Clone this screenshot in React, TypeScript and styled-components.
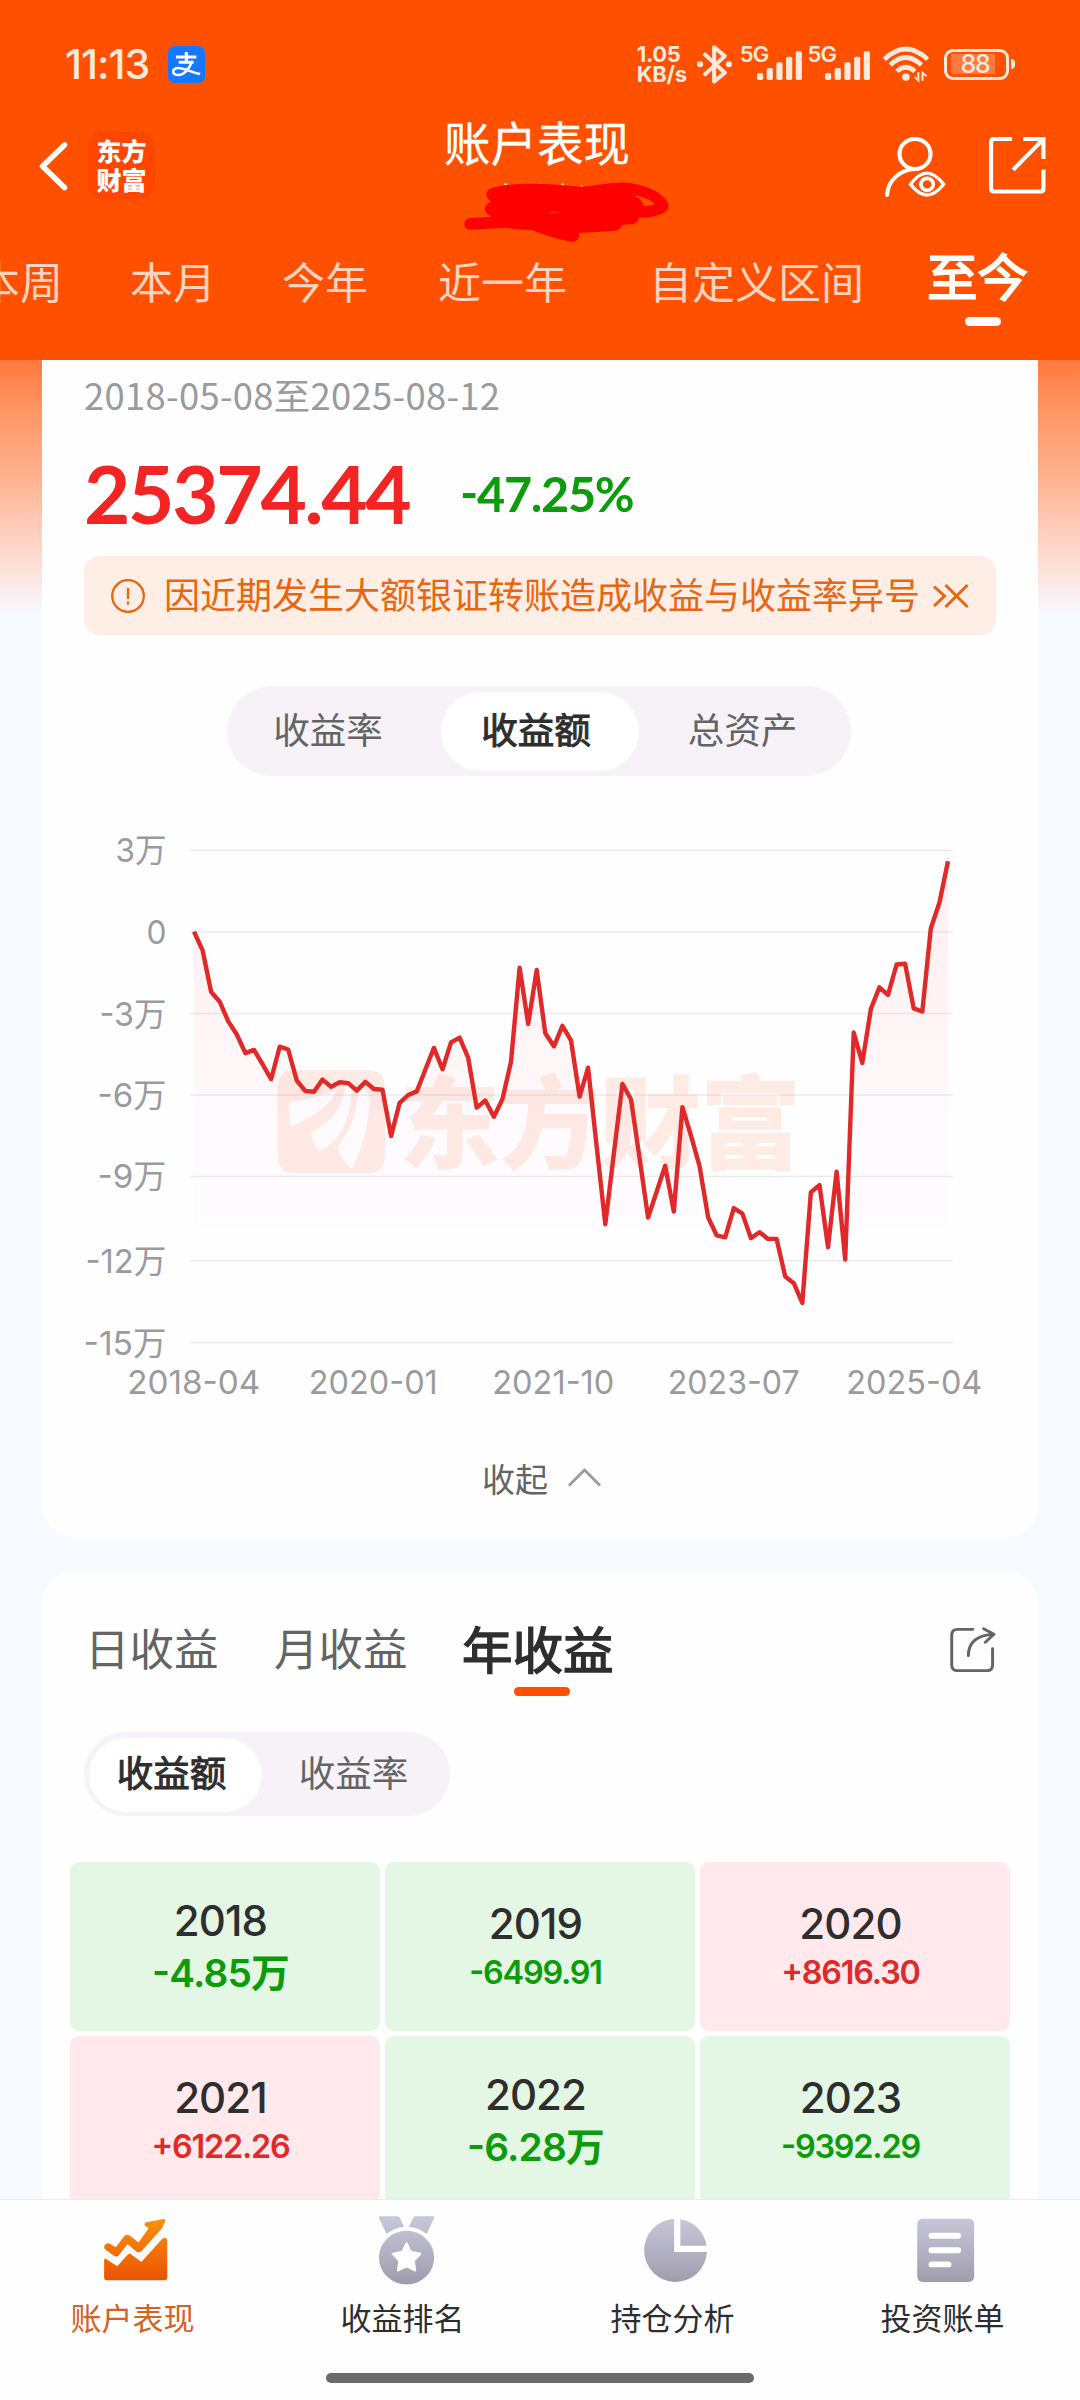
import React from "react";
import styled, { createGlobalStyle, css } from "styled-components";

const CJK = `"Noto Sans CJK SC", sans-serif`;
const NUM = `Inter, "Noto Sans CJK SC", sans-serif`;

const GlobalStyle = createGlobalStyle`
  *, *::before, *::after { box-sizing: border-box; }
  body { margin: 0; background: #f7faff; font-family: ${CJK}; }
  svg { display: block; flex: none; overflow: visible; }
`;

const Screen = styled.div`
  width: 1080px;
  height: 2400px;
  display: flex;
  flex-direction: column;
  overflow: hidden;
  background: #f7faff;
`;

/* ---------- header ---------- */

const Header = styled.header`
  flex: none;
  height: 360px;
  background: #ff5000;
  color: #fff;
  overflow: hidden;
`;

const StatusBar = styled.div`
  height: 110px;
  padding: 18px 65.5px 0 65px;
  display: flex;
  align-items: center;
  justify-content: space-between;
  color: #ffe9dc;
`;

const StatusGroup = styled.div`
  display: flex;
  align-items: center;
`;

const Clock = styled.span`
  width: 103px;
  font: 500 41px/46px ${NUM};
  letter-spacing: -1px;
`;

const Speed = styled.div`
  width: 60.6px;
  font: 700 22px/20px ${NUM};
  letter-spacing: -0.3px;
  white-space: nowrap;
`;

const Radios = styled.div`
  display: flex;
  margin: 0 6.6px 0 8.5px;
`;

const Signal = styled.div`
  display: flex;
  width: 67.8px;
  height: 38.7px;
`;

const Network = styled.span`
  width: 17.2px;
  margin-left: -1px;
  font: 600 22px/19px ${NUM};
  letter-spacing: -1px;
`;

const Battery = styled.div`
  display: flex;
  align-items: center;
  gap: 2px;
  margin-left: 15px;
`;

const BatteryCell = styled.div`
  width: 64.5px;
  height: 31px;
  padding: 2.5px 3.5px;
  border: 3px solid #ffe9dc;
  border-radius: 9px;
`;

const BatteryLevel = styled.div`
  width: 44px;
  height: 20px;
  padding-left: 10px;
  background: rgba(255, 255, 255, 0.24);
  font: 500 25px/20px ${NUM};
  letter-spacing: -1.2px;
`;

const BatteryNub = styled.div`
  width: 4px;
  height: 10px;
  border-radius: 0 4px 4px 0;
  background: #ffe9dc;
`;

const NavBar = styled.div`
  height: 122px;
  display: grid;
  grid-template-columns: 340px 1fr 340px;
`;

const NavSide = styled.div<{ $end?: boolean }>`
  display: flex;
  align-items: flex-start;
  padding: ${(p) => (p.$end ? "26.500px 35px 0 0" : "22px 0 0 39px")};
  gap: ${(p) => (p.$end ? "44px" : "20px")};
  justify-content: ${(p) => (p.$end ? "flex-end" : "flex-start")};
`;

const BackArrow = styled.svg`
  margin-top: 10.3px;
`;

const BrandBadge = styled.div`
  width: 67px;
  height: 67px;
  padding: 4px 0 0 8.5px;
  border-radius: 14px;
  background: #ff4600;
  font: 900 25px/28.5px ${CJK};
`;

const TitleColumn = styled.div`
  display: flex;
  flex-direction: column;
  align-items: center;
  padding: 7px 6px 0 0;
`;

const Title = styled.h1`
  margin: 0 0 17.5px;
  font: 400 46.5px/47px ${CJK};
  -webkit-text-stroke: 0.3px currentColor;
`;

const Scribble = styled.svg`
  margin-left: 58px;
`;

const PeriodTabs = styled.nav`
  display: flex;
  width: max-content;
  margin-left: -23px;
  padding-top: 18.4px;
`;

const PeriodTab = styled.div<{ $gap: number; $active?: boolean }>`
  margin-left: ${(p) => p.$gap}px;
  font: 400 43px/60px ${CJK};
  color: rgba(255, 255, 255, 0.76);
  white-space: nowrap;
  ${(p) =>
    p.$active &&
    css`
      margin-top: -6.4px;
      color: #fff;
      font-size: 50.5px;
      -webkit-text-stroke: 1.8px currentColor;
    `}
`;

const TabMark = styled.div<{ $w: number; $color: string; $m: string }>`
  width: ${(p) => p.$w}px;
  height: 9px;
  margin: ${(p) => p.$m};
  border-radius: 5px;
  background: ${(p) => p.$color};
`;

/* ---------- scrolling body ---------- */

const Body = styled.main`
  flex: none;
  height: 1839px;
  padding: 0 42px;
  overflow: hidden;
  background: linear-gradient(
      180deg,
      #ff7a3e 0,
      #ff9565 50px,
      #ffb08e 114px,
      #fed0c0 175px,
      #fde3dd 212px,
      #f9f1f4 238px,
      #f7faff 254px
    )
    no-repeat;
`;

const Card = styled.section<{ $first?: boolean }>`
  border-radius: ${(p) => (p.$first ? "0 0 33px 33px" : "33px")};
  height: ${(p) => (p.$first ? "1178.3px" : "700px")};
  margin-bottom: 33.3px;
  background: #fefefe;
  display: flex;
  flex-direction: column;
`;

const DateRange = styled.div`
  margin: 10px 42px 0;
  font: 400 36.4px/48px ${CJK};
  letter-spacing: 0.3px;
  color: #9b9b9d;
`;

const Totals = styled.div`
  display: flex;
  align-items: center;
  height: 100px;
  margin: 25px 42px 0;
  font-family: Lato, ${CJK};
  font-feature-settings: "case";
`;

const Profit = styled.span`
  width: 376px;
  font-size: 80px;
  font-weight: 700;
  line-height: 100px;
  letter-spacing: -2.3px;
  color: #f22424;
`;

const Rate = styled.span`
  font-size: 48.6px;
  font-weight: 700;
  letter-spacing: -1.3px;
  color: #0b9b0b;
`;

const Notice = styled.div`
  flex: none;
  height: 79px;
  margin: 13px 42px 0;
  padding: 0 27px;
  display: flex;
  align-items: center;
  border-radius: 16px;
  background: #ffeee6;
  color: #e8660f;
`;

const NoticeText = styled.span`
  width: 769px;
  margin: -5px 0 0 19px;
  font: 400 36px/50px ${CJK};
  white-space: nowrap;
`;

const Segment = styled.div<{ $w: number; $h: number; $m: string; $pad: string }>`
  flex: none;
  width: ${(p) => p.$w}px;
  height: ${(p) => p.$h}px;
  margin: ${(p) => p.$m};
  padding: ${(p) => p.$pad};
  display: flex;
  border-radius: 46px;
  background: #f6f2f7;
`;

const SegmentItem = styled.div<{ $w: number; $pr: number; $active?: boolean }>`
  flex: none;
  width: ${(p) => p.$w}px;
  padding: 0 ${(p) => p.$pr}px 6px 0;
  display: flex;
  align-items: center;
  justify-content: center;
  border-radius: 42px;
  font: 400 36.6px/50px ${CJK};
  color: ${(p) => (p.$active ? "#2e2e2e" : "#646464")};
  background: ${(p) => (p.$active ? "#fff" : "transparent")};
  -webkit-text-stroke: ${(p) => (p.$active ? "1px" : "0")} currentColor;
`;

const Chart = styled.svg`
  margin: 24px 0 0 18px;
  font-family: ${NUM};
  font-feature-settings: "case";
  fill: #9b9b9d;
`;

const Collapse = styled.div`
  display: flex;
  align-items: center;
  margin: 53.5px 0 0 440px;
  gap: 20px;
  font: 400 33px/48px ${CJK};
  color: #646464;
`;

const CardHead = styled.div`
  display: flex;
  align-items: flex-start;
  height: 160.4px;
  padding: 45px 43px 0;
`;

const ReturnTab = styled.div<{ $w: number; $active?: boolean }>`
  width: ${(p) => p.$w}px;
  font: 400 ${(p) => (p.$active ? "50.500px" : "44.500px")}/60px ${CJK};
  color: ${(p) => (p.$active ? "#2e2e2e" : "#646464")};
  -webkit-text-stroke: ${(p) => (p.$active ? "1.5px" : "0")} currentColor;
  white-space: nowrap;
`;

const HeadAction = styled.div`
  margin: 10.5px 0 0 auto;
`;

const YearGrid = styled.div`
  display: grid;
  grid-template-columns: repeat(3, 310px);
  grid-auto-rows: 168.6px;
  gap: 5.3px 5px;
  margin: 46.3px 28px 0;
`;

const YearCell = styled.div<{ $up?: boolean }>`
  display: flex;
  flex-direction: column;
  align-items: center;
  padding: 37.5px 9px 0 0;
  border-radius: 9px;
  background: ${(p) => (p.$up ? "#ffe9ec" : "#e4f6e4")};
  color: ${(p) => (p.$up ? "#de2a2a" : "#0b9b0b")};
`;

const Year = styled.div<{ $raised?: boolean }>`
  margin-top: ${(p) => (p.$raised ? -3 : 0)}px;
  margin-bottom: ${(p) => (p.$raised ? 4 : 1)}px;
  font: 500 42px/50px ${NUM};
  letter-spacing: -0.9px;
  color: #2e2e2e;
`;

const Amount = styled.div<{ $large?: boolean }>`
  font: 600 ${(p) => (p.$large ? 38.8 : 32.4)}px/46px ${NUM};
  font-feature-settings: "case";
  letter-spacing: ${(p) => (p.$large ? -0.8 : -1.2)}px;
`;

/* ---------- bottom navigation ---------- */

const Footer = styled.footer`
  flex: none;
  height: 201px;
  border-top: 1px solid #ececee;
  background: #fefefe;
  display: flex;
  flex-direction: column;
  align-items: center;
`;

const NavItems = styled.div`
  display: grid;
  grid-template-columns: repeat(4, 270px);
  height: 173px;
`;

const NavItem = styled.div<{ $active?: boolean }>`
  display: flex;
  flex-direction: column;
  align-items: center;
  padding-top: 14.3px;
  color: ${(p) => (p.$active ? "#d5621f" : "#2e2e2e")};
`;

const NavLabel = styled.span`
  margin: 7.6px 5px 0 0;
  font: 400 31px/46px ${CJK};
`;

const HomeBar = styled.div`
  width: 428px;
  height: 10px;
  border-radius: 5px;
  background: #6c696d;
`;

/* ---------- icons ---------- */

const AlipayIcon = () => (
  <svg width="37" height="37" viewBox="0 0 107 111" preserveAspectRatio="none" fill="none">
    <rect width="107" height="111" rx="20" fill="#1677ff" />
    <g stroke="#fff" strokeWidth="9">
      <path d="M23 33H82M53 18V49M31 49H74" />
      <path d="M69 47C62 70 46 86 31 87C10 87 10 66 30 66C50 66 66 80 93 84" strokeWidth="7.500" />
    </g>
  </svg>
);

const BluetoothIcon = () => (
  <svg
    width="35"
    height="38.7"
    viewBox="0 0 102 116"
    preserveAspectRatio="none"
    fill="none"
    stroke="#ffe9dc"
    strokeWidth="12"
    strokeLinejoin="round"
  >
    <path d="M20 25L81 83L50 109V7L81 33L20 91" />
    <circle cx="9" cy="58" r="9" fill="#ffe9dc" stroke="none" />
    <circle cx="93" cy="58" r="9" fill="#ffe9dc" stroke="none" />
  </svg>
);

const BARS = [21, 36, 53, 70, 86];

const SignalBars = () => (
  <svg width="45" height="38.7" viewBox="0 0 131 116" preserveAspectRatio="none" fill="#ffe9dc">
    {BARS.map((h, i) => (
      <rect key={h} x={i * 28.2} y={105 - h} width="18" height={h} rx="5" />
    ))}
  </svg>
);

const WifiIcon = () => (
  <svg width="46" height="33.7" viewBox="0 0 133 101" preserveAspectRatio="none" fill="none" stroke="#ffe9dc">
    <path d="M4 37Q66 -25 129 37" strokeWidth="14" />
    <path d="M21 54Q66 9 111 54" strokeWidth="14" />
    <path d="M40 73Q66 48 92 73" strokeWidth="14" />
    <circle cx="66" cy="90" r="11" fill="#ffe9dc" stroke="none" />
    <path d="M102 76V100L92 90M114 101V77L126 88" strokeWidth="6" />
  </svg>
);

const ViewerIcon = () => (
  <svg width="60" height="60" viewBox="0 0 174 180" preserveAspectRatio="none" fill="none" stroke="#fff" strokeWidth="12">
    <circle cx="87" cy="51" r="45" />
    <path d="M87 96C45 97 8 130 6 174" strokeLinecap="round" />
    <path d="M74 142Q121 75 170 142Q121 206 74 142Z" strokeWidth="10" />
    <circle cx="122" cy="142" r="18" strokeWidth="11" />
  </svg>
);

const ExternalIcon = () => (
  <svg width="56.500" height="56.500" viewBox="0 0 164 169" preserveAspectRatio="none" fill="none" stroke="#fff" strokeWidth="12">
    <path d="M67 6H14Q6 6 6 14V155Q6 163 14 163H150Q158 163 158 155V97" />
    <path d="M99 6H158V66M158 6L70 98" />
  </svg>
);

const ScribbleMark = () => (
  <Scribble width="205" height="60" viewBox="70 64 615 180">
    <g fill="#ffd9c4">
      <circle cx="195" cy="71" r="4" />
      <circle cx="298" cy="70" r="2.500" />
      <circle cx="366" cy="72" r="4" />
      <circle cx="424" cy="77" r="3" />
    </g>
    <path
      fillRule="evenodd"
      fill="#f00"
      d="M155 81C220 66 300 66 420 78C470 76 510 64 555 66C620 70 684 105 684 137C683 162 635 171 594 171C594 183 585 191 570 191L543 193C542 204 535 209 520 210C490 213 450 214 415 217C416 236 409 243 395 243C355 238 310 222 272 208C245 208 220 205 196 201L90 207C65 207 65 173 90 172L152 168C128 158 125 132 152 123C130 109 134 86 155 81ZM575 103C595 110 607 121 610 137C622 137 633 135 643 131C630 117 605 106 575 103ZM317 155C330 157 345 157 360 154C345 153 330 153 317 155Z"
    />
  </Scribble>
);

const InfoIcon = () => (
  <svg width="34" height="34" viewBox="0 0 34 34" fill="none" stroke="currentColor" strokeWidth="2.300">
    <circle cx="17" cy="17" r="15.800" />
    <path d="M17 9V20M17 22.500V25.500" />
  </svg>
);

const MoreCloseIcon = () => (
  <svg width="36" height="24" viewBox="0 0 36 24" fill="none" stroke="currentColor" strokeWidth="3">
    <path d="M1 2.500L11.500 12L1 22M12.500 1L34.500 23M34.500 1L12.500 23" />
  </svg>
);

const ShareIcon = () => (
  <svg
    width="45"
    height="45.300"
    viewBox="0 0 130 136"
    preserveAspectRatio="none"
    fill="none"
    stroke="#646464"
    strokeWidth="8.500"
    strokeLinecap="round"
    strokeLinejoin="round"
  >
    <path d="M66 7H22Q5 7 5 24V114Q5 131 22 131H107Q123 131 123 114V65" />
    <path d="M53 86C53 46 77 24 127 22M97 5L127 22L102 46" />
  </svg>
);

const IconGradient = ({ id, from, to }: { id: string; from: string; to: string }) => (
  <defs>
    <linearGradient id={id} x1="0" y1="10" x2="0" y2="195" gradientUnits="userSpaceOnUse">
      <stop stopColor={from} />
      <stop offset="1" stopColor={to} />
    </linearGradient>
  </defs>
);

const NavSvg = styled.svg.attrs({ viewBox: "0 0 203 203", preserveAspectRatio: "none" })`
  width: 70px;
  height: 72.6px;
`;

const PerformanceIcon = () => (
  <NavSvg fill="url(#hot)">
    <IconGradient id="hot" from="#fb930b" to="#ea5000" />
    <path d="M12 93Q12 82 26 82L46 93L70 62Q77 55 86 60L112 80L141 40L131 33Q126 26 134 23L185 14Q191 14 189 20L180 40L120 104Q112 110 104 104L80 84L54 116Q48 122 40 116L16 100Q12 97 12 93Z" />
    <path d="M12 128Q14 122 20 127L50 146L80 114Q86 109 92 114L120 134L180 70Q190 62 195 72V179Q195 185 189 185H18Q12 185 12 179Z" />
  </NavSvg>
);

const RankIcon = () => (
  <NavSvg fill="url(#rank)">
    <IconGradient id="rank" from="#c8c7da" to="#9e9cac" />
    <path d="M29 6H80Q84 6 86 10L99 36Q70 39 48 56L26 12Q24 6 29 6ZM183 6H132Q128 6 126 10L113 36Q142 39 164 56L186 12Q188 6 183 6Z" />
    <ellipse cx="106" cy="122" rx="80" ry="75" />
    <path
      d="M106 82L118 106L146 111L127 131L131 158L106 146L81 158L85 131L66 111L94 106Z"
      fill="#fff"
      stroke="#fff"
      strokeWidth="6"
      strokeLinejoin="round"
    />
  </NavSvg>
);

const HoldingsIcon = () => (
  <NavSvg fill="url(#pie)">
    <IconGradient id="pie" from="#c8c7da" to="#9e9cac" />
    <path d="M99 14A91 88 0 1 0 194 106H99Z" />
    <path d="M117 15A91 88 0 0 1 193 89H117Z" />
  </NavSvg>
);

const BillIcon = () => (
  <NavSvg fill="url(#bill)">
    <IconGradient id="bill" from="#c8c7da" to="#9e9cac" />
    <rect x="21" y="13" width="165" height="177" rx="15" />
    <path d="M62 61H140M62 101.500H140M62 141H112" stroke="#fff" strokeWidth="16.500" strokeLinecap="round" />
  </NavSvg>
);

/* ---------- profit chart ---------- */

const GRID = [
  { y: 50.2, label: "3万", w: 51 },
  { y: 131.7, label: "0", w: 20 },
  { y: 213.5, label: "-3万", w: 67 },
  { y: 295, label: "-6万", w: 69 },
  { y: 376.4, label: "-9万", w: 69 },
  { y: 460.7, label: "-12万", w: 81 },
  { y: 542.5, label: "-15万", w: 83 },
];

const MONTHS = [
  { x: 133.7, label: "2018-04", w: 133 },
  { x: 313.3, label: "2020-01", w: 129 },
  { x: 493.3, label: "2021-10", w: 122 },
  { x: 673.7, label: "2023-07", w: 132 },
  { x: 854.3, label: "2025-04", w: 136 },
];

/* monthly running totals, measured down from the top of the chart */
const TREND = [
  333, 380, 485, 510, 560, 593, 640, 632, 668, 706, 624, 631, 710, 736, 738, 707, 725, 714, 716, 735, 713, 731, 733,
  850, 766, 746, 737, 682, 627, 681, 613, 601, 652, 778, 760, 801, 757, 662, 424, 566, 430, 590, 623, 571, 608, 750,
  677, 877, 1073, 895, 718, 757, 905, 1056, 990, 925, 1041, 777, 848, 925, 1055, 1101, 1106, 1032, 1046, 1108, 1093,
  1110, 1110, 1205, 1222, 1272, 992, 974, 1131, 940, 1162, 588, 665, 528, 474, 493, 416, 414, 527, 535, 325, 260, 155,
];
const UNITS_PER_PIXEL = 2.529;

const ProfitChart = () => {
  const points = TREND.map((v, i) => `${(134 + i * 8.568).toFixed(1)},${(v / UNITS_PER_PIXEL).toFixed(1)}`).join(" ");
  return (
    <Chart width="940" height="600" viewBox="0 0 940 600">
      <defs>
        <linearGradient id="area" x1="0" y1="60" x2="0" y2="542" gradientUnits="userSpaceOnUse">
          <stop stopColor="#ff3050" stopOpacity="0.075" />
          <stop offset="0.45" stopColor="#ff3048" stopOpacity="0.035" />
          <stop offset="0.53" stopColor="#d040e0" stopOpacity="0.018" />
          <stop offset="0.74" stopColor="#d040e0" stopOpacity="0.012" />
          <stop offset="0.77" stopColor="#d040e0" stopOpacity="0" />
        </linearGradient>
      </defs>
      {GRID.map((g) => (
        <line key={g.label} x1="129.500" x2="892.700" y1={g.y} y2={g.y} stroke="#ebebef" strokeWidth="1.500" />
      ))}
      <g opacity="0.13" fill="#ff7038">
        <path
          transform="scale(1 1.186)"
          fillRule="evenodd"
          d="M235 227.700H307.500Q325 227.700 325 243V299Q325 314.700 307.500 314.700H235Q217.700 314.700 217.700 299V243Q217.700 227.700 235 227.700ZM229 258Q229 254.500 233 254.300Q258 252 277 243Q271 262 230 275ZM285.500 241C283 258 270 274 251 280Q253 290 259 296C280 289 291 270 292 241ZM298 241C298 260 292 277 278 292Q280 303 291 311C303 296 311 268 309 247Z"
        />
        <text x="339" y="361" fontSize="101" fontWeight="900" textLength="402" fontFamily='"Noto Sans CJK SC", sans-serif'>
          东方财富
        </text>
      </g>
      <polygon points={`134,542 ${points} 888,542`} fill="url(#area)" />
      <polyline points={points} fill="none" stroke="#e12929" strokeWidth="4.400" strokeLinejoin="round" />
      {GRID.map((g) => (
        <text key={g.label} x={106.500 - g.w} y={g.y + 12} fontSize="32.500" textLength={g.w} lengthAdjust="spacingAndGlyphs">
          {g.label}
        </text>
      ))}
      {MONTHS.map((m) => (
        <text key={m.label} x={m.x - m.w / 2} y="593.900" fontSize="32.500" textLength={m.w} lengthAdjust="spacingAndGlyphs">
          {m.label}
        </text>
      ))}
    </Chart>
  );
};

/* ---------- page data ---------- */

const PERIODS = [
  { label: "本周", gap: 0 },
  { label: "本月", gap: 67 },
  { label: "今年", gap: 66 },
  { label: "近一年", gap: 70 },
  { label: "自定义区间", gap: 82 },
];

const YEARS = [
  { year: "2018", amount: "-4.85万" },
  { year: "2019", amount: "-6499.91" },
  { year: "2020", amount: "+8616.30" },
  { year: "2021", amount: "+6122.26" },
  { year: "2022", amount: "-6.28万" },
  { year: "2023", amount: "-9392.29" },
];

const NAV = [
  { label: "账户表现", icon: <PerformanceIcon />, active: true },
  { label: "收益排名", icon: <RankIcon /> },
  { label: "持仓分析", icon: <HoldingsIcon /> },
  { label: "投资账单", icon: <BillIcon /> },
];

const MobileSignal = () => (
  <Signal>
    <Network>5G</Network>
    <SignalBars />
  </Signal>
);

export default function App() {
  return (
    <Screen>
      <GlobalStyle />
      <Header>
        <StatusBar>
          <StatusGroup>
            <Clock>11:13</Clock>
            <AlipayIcon />
          </StatusGroup>
          <StatusGroup>
            <Speed>
              1.05
              <br />
              KB/s
            </Speed>
            <BluetoothIcon />
            <Radios>
              <MobileSignal />
              <MobileSignal />
            </Radios>
            <WifiIcon />
            <Battery>
              <BatteryCell>
                <BatteryLevel>88</BatteryLevel>
              </BatteryCell>
              <BatteryNub />
            </Battery>
          </StatusGroup>
        </StatusBar>
        <NavBar>
          <NavSide>
            <BackArrow
              width="29"
              height="48.400"
              viewBox="0 0 29 48.4"
              fill="none"
              stroke="#fff"
              strokeWidth="5.500"
              strokeLinecap="round"
              strokeLinejoin="round"
            >
              <path d="M25.500 3L3.500 24.200L25.500 45.500" />
            </BackArrow>
            <BrandBadge>
              东方
              <br />
              财富
            </BrandBadge>
          </NavSide>
          <TitleColumn>
            <Title>账户表现</Title>
            <ScribbleMark />
          </TitleColumn>
          <NavSide $end>
            <ViewerIcon />
            <ExternalIcon />
          </NavSide>
        </NavBar>
        <PeriodTabs>
          {PERIODS.map((p) => (
            <PeriodTab key={p.label} $gap={p.gap}>
              {p.label}
            </PeriodTab>
          ))}
          <PeriodTab $gap={63} $active>
            至今
            <TabMark $w={36} $color="#fff" $m="13px 0 0 38px" />
          </PeriodTab>
        </PeriodTabs>
      </Header>

      <Body>
        <Card $first>
          <DateRange>2018-05-08至2025-08-12</DateRange>
          <Totals>
            <Profit>25374.44</Profit>
            <Rate>-47.25%</Rate>
          </Totals>
          <Notice>
            <InfoIcon />
            <NoticeText>因近期发生大额银证转账造成收益与收益率异号</NoticeText>
            <MoreCloseIcon />
          </Notice>
          <Segment $w={624} $h={90} $m="51px 0 0 185px" $pad="6px 5px 5px">
            <SegmentItem $w={209} $pr={17}>
              收益率
            </SegmentItem>
            <SegmentItem $w={198} $pr={8} $active>
              收益额
            </SegmentItem>
            <SegmentItem $w={207} $pr={0}>
              总资产
            </SegmentItem>
          </Segment>
          <ProfitChart />
          <Collapse>
            收起
            <svg width="33" height="19" viewBox="0 0 33 19" fill="none" stroke="#9b9b9d" strokeWidth="2.800">
              <path d="M1 17.500L16.500 2L32 17.500" />
            </svg>
          </Collapse>
        </Card>

        <Card>
          <CardHead>
            <ReturnTab $w={189}>日收益</ReturnTab>
            <ReturnTab $w={188}>月收益</ReturnTab>
            <ReturnTab $w={160} $active>
              年收益
              <TabMark $w={56} $color="#ff5000" $m="10.5px 0 0 52px" />
            </ReturnTab>
            <HeadAction>
              <ShareIcon />
            </HeadAction>
          </CardHead>
          <Segment $w={366} $h={83.7} $m="0 0 0 42px" $pad="6px 5px 4px">
            <SegmentItem $w={173} $pr={8} $active>
              收益额
            </SegmentItem>
            <SegmentItem $w={183} $pr={0}>
              收益率
            </SegmentItem>
          </Segment>
          <YearGrid>
            {YEARS.map((y) => {
              const large = y.amount.endsWith("万");
              return (
                <YearCell key={y.year} $up={y.amount.startsWith("+")}>
                  <Year $raised={large}>{y.year}</Year>
                  <Amount $large={large}>{y.amount}</Amount>
                </YearCell>
              );
            })}
          </YearGrid>
        </Card>
      </Body>

      <Footer>
        <NavItems>
          {NAV.map((n) => (
            <NavItem key={n.label} $active={n.active}>
              {n.icon}
              <NavLabel>{n.label}</NavLabel>
            </NavItem>
          ))}
        </NavItems>
        <HomeBar />
      </Footer>
    </Screen>
  );
}
